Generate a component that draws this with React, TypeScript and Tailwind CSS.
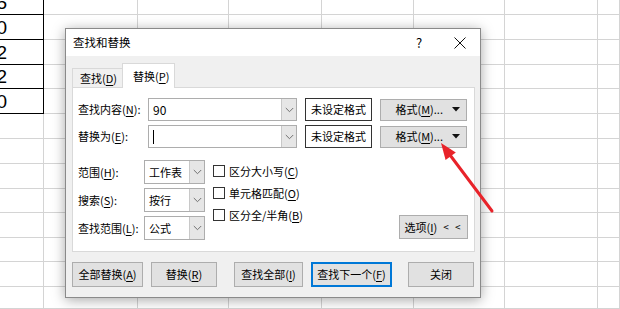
import React from "react";

const ROWS = [25, 25, 25, 24, 25, 25, 25, 25, 24, 25, 24, 25, 22];
const COLS = [44, 94, 91, 93, 92, 91, 93, 22];
const NUMS = ["5", "0", "2", "2", "0"];

function Sheet() {
  return (
    <div className="flex flex-col -mt-[10px]">
      {ROWS.map((h, r) => (
        <div key={r} className="flex" style={{ height: h }}>
          {COLS.map((w, c) => {
            const black = c === 0 && r < 5;
            return (
              <div
                key={c}
                style={{ width: w }}
                className={
                  "shrink-0 border-r border-b flex items-center justify-end " +
                  (black ? "border-black" : "border-[#d4d4d4]")
                }
              >
                {c === 0 && r < 5 ? (
                  <span className="pr-[36px] text-[19px] leading-none text-black font-['Liberation_Sans',sans-serif]">
                    {NUMS[r]}
                  </span>
                ) : null}
              </div>
            );
          })}
        </div>
      ))}
    </div>
  );
}

function Chevron() {
  return (
    <svg width="9" height="6" viewBox="0 0 9 6">
      <path d="M0.8 1 L4.5 4.7 L8.2 1" fill="none" stroke="#707070" strokeWidth="1" />
    </svg>
  );
}

function Combo({ w, children }: { w: string; children?: React.ReactNode }) {
  return (
    <div className={`${w} h-full flex border border-[#adadad] bg-white`}>
      <div className="flex-1 flex items-center pl-[3px] overflow-hidden">{children}</div>
      <div className="w-[15px] flex items-center justify-center bg-[#e6e6e6] border-l border-[#c8c8c8]">
        <Chevron />
      </div>
    </div>
  );
}

function Btn({ w, children, focus }: { w: string; children: React.ReactNode; focus?: boolean }) {
  return (
    <div
      className={`${w} h-full flex items-center justify-center whitespace-nowrap bg-[#e1e1e1] ${
        focus ? "border-2 border-[#0078d7]" : "border border-[#adadad]"
      }`}
    >
      {children}
    </div>
  );
}

function U({ c }: { c: string }) {
  return <span className="underline underline-offset-[2px] decoration-[1px]">{c}</span>;
}

function Check({ children }: { children: React.ReactNode }) {
  return (
    <div className="h-[22px] flex items-center">
      <div className="w-[12px] h-[12px] border border-[#333] bg-white" />
      <span className="ml-[4px] whitespace-nowrap">{children}</span>
    </div>
  );
}

function FormatBtn() {
  return (
    <div className="ml-[8px] w-[87px] h-[22px]">
      <Btn w="w-full">
        <span className="ml-auto">
          格式(<U c="M" />)...
        </span>
        <svg width="8" height="5" viewBox="0 0 8 5" className="ml-[9px] mr-[6px]">
          <polygon points="0,0 8,0 4,4.5" fill="#111" />
        </svg>
      </Btn>
    </div>
  );
}

function Dialog() {
  return (
    <div className="absolute left-[65px] top-[28px] w-[416px] h-[270px] border border-[#8a8a8a] bg-[#f0f0f0] shadow-[0_2px_12px_rgba(0,0,0,0.35)] flex flex-col text-[11px] leading-none text-black whitespace-nowrap font-['Noto_Sans_CJK_SC','Noto_Sans',sans-serif]">
      <div className="h-[27px] shrink-0 bg-white flex items-center pl-[7px]">
        <span className="text-[11.5px]">查找和替换</span>
        <div className="ml-auto flex items-center">
          <span className="w-[20px] text-center text-[13px]">?</span>
          <div className="ml-[17px] w-[28px] flex justify-center">
            <svg width="12" height="12" viewBox="0 0 12 12">
              <path d="M0.5 0.5 L11.5 11.5 M11.5 0.5 L0.5 11.5" stroke="#111" strokeWidth="1" />
            </svg>
          </div>
          <div className="w-[6px]" />
        </div>
      </div>

      <div className="flex-1 pl-[6px] pr-[5px] pt-[7px] flex flex-col">
        <div className="h-[24px] flex items-end">
          <div className="w-[50px] h-[19px] border-l border-t border-[#d9d9d9] flex items-center pl-[7px] pt-[1px]">
            查找(<U c="D" />)
          </div>
          <div className="relative z-10 w-[53px] h-[25px] -mb-px bg-white border-l border-t border-r border-[#d9d9d9] flex items-center pl-[10px]">
            替换(<U c="P" />)
          </div>
        </div>

        <div className="h-[165px] border border-[#d9d9d9] bg-white pt-[10px] pl-[5px] pr-[6px] flex flex-col">
          <div className="h-[23px] flex items-center">
            <div className="w-[70px]">
              查找内容(<U c="N" />):
            </div>
            <Combo w="w-[149px]">
              <span className="pl-[1px] text-[12px]">90</span>
            </Combo>
            <div className="ml-[8px] w-[67px] h-full border-[1.5px] border-[#333] bg-white flex items-center justify-center">
              未设定格式
            </div>
            <FormatBtn />
          </div>

          <div className="h-[23px] mt-[4px] flex items-center">
            <div className="w-[70px]">
              替换为(<U c="E" />):
            </div>
            <Combo w="w-[149px]">
              <div className="w-px h-[14px] bg-black ml-[1px]" />
            </Combo>
            <div className="ml-[8px] w-[67px] h-full border-[1.5px] border-[#333] bg-white flex items-center justify-center">
              未设定格式
            </div>
            <FormatBtn />
          </div>

          <div className="mt-[12px] flex">
            <div className="flex flex-col gap-[4px]">
              {[
                ["范围", "H", "工作表"],
                ["搜索", "S", "按行"],
                ["查找范围", "L", "公式"],
              ].map(([l, k, v]) => (
                <div key={k} className="h-[24px] flex items-center">
                  <div className="w-[66px]">
                    {l}(<U c={k} />):
                  </div>
                  <Combo w="w-[61px]">
                    <span className="pl-[1px]">{v}</span>
                  </Combo>
                </div>
              ))}
            </div>
            <div className="ml-[8px] flex flex-col">
              <Check>
                区分大小写(<U c="C" />)
              </Check>
              <Check>
                单元格匹配(<U c="O" />)
              </Check>
              <Check>
                区分全/半角(<U c="B" />)
              </Check>
            </div>
            <div className="ml-auto self-end mb-[1px] w-[69px] h-[24px]">
              <Btn w="w-full">
                <span>
                  选项(<U c="I" />)
                </span>
                <span className="ml-[6px] tracking-[2px] text-[10px]">&lt; &lt;</span>
              </Btn>
            </div>
          </div>
        </div>

        <div className="mt-[10px] h-[25px] flex">
          <Btn w="w-[71px]">
            全部替换(<U c="A" />)
          </Btn>
          <div className="ml-[8px] h-full">
            <Btn w="w-[66px]">
              替换(<U c="R" />)
            </Btn>
          </div>
          <div className="ml-[17px] h-full">
            <Btn w="w-[69px]">
              查找全部(<U c="I" />)
            </Btn>
          </div>
          <div className="ml-[8px] h-full">
            <Btn w="w-[81px]" focus>
              查找下一个(<U c="F" />)
            </Btn>
          </div>
          <div className="ml-[16px] h-full">
            <Btn w="w-[66px]">关闭</Btn>
          </div>
        </div>
      </div>
    </div>
  );
}

function Arrow() {
  return (
    <svg className="absolute left-0 top-0 pointer-events-none" width="620" height="309" viewBox="0 0 620 309">
      <line x1="492" y1="211" x2="450" y2="155" stroke="#e8232a" strokeWidth="3" strokeLinecap="round" />
      <polygon points="441,143 455.8,152.4 445.6,160" fill="#e8232a" />
    </svg>
  );
}

export default function App() {
  return (
    <div className="relative w-[620px] h-[309px] overflow-hidden bg-white">
      <Sheet />
      <Dialog />
      <Arrow />
    </div>
  );
}
